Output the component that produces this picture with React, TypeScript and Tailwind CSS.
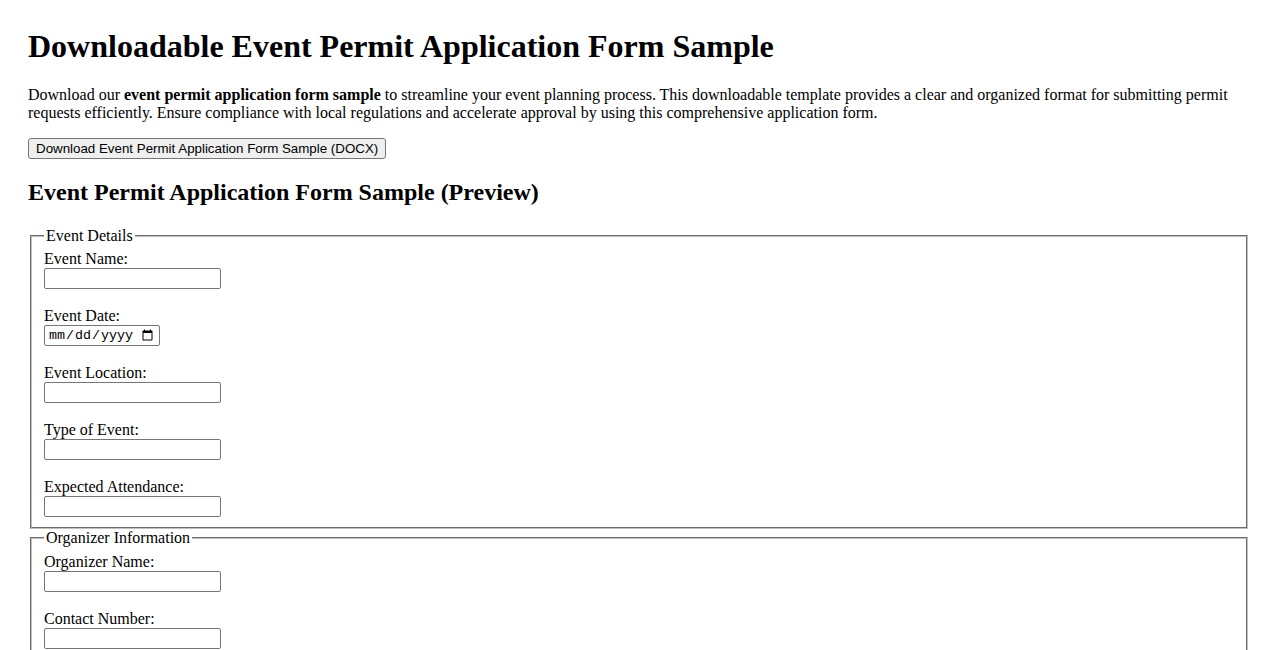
import React from "react";

const serif = "font-['Liberation_Serif','Times_New_Roman',serif]";

function Field({ label, type = "text" }: { label: string; type?: string }) {
    return (
        <div className="flex flex-col items-start">
            <label className="block leading-[18px]">{label}</label>
            {type === "date" ? (
                <input
                    type="date"
                    className="w-[116px] h-[21px] border border-[#767676] rounded-[2px] px-[3px] text-[13.333px] font-['Liberation_Mono',monospace] bg-white"
                />
            ) : (
                <input
                    type={type}
                    className="w-[177px] h-[21px] border border-[#767676] rounded-[2px] px-[2px] text-[13.333px] bg-white"
                />
            )}
        </div>
    );
}

function Section({ title, children }: { title: string; children: React.ReactNode }) {
    return (
        <fieldset className="mx-[2px] px-[12px] pt-[5.6px] pb-[10px] border-2 [border-style:groove] border-[#c0c0c0]">
            <legend className="px-[2px] leading-[18px]">{title}</legend>
            <div className="flex flex-col gap-[18px]">{children}</div>
        </fieldset>
    );
}

export default function App() {
    return (
        <div className={`${serif} text-black bg-white min-h-screen pt-[8px] px-[28px] text-[16px]`}>
            <h1 className="text-[32px] font-bold leading-[36.8px] mt-[20px] mb-[21.44px]">
                Downloadable Event Permit Application Form Sample
            </h1>
            <p className="leading-[18px] mb-[16px]">
                Download our <strong>event permit application form sample</strong> to streamline your event planning
                process. This downloadable template provides a clear and organized format for submitting permit
                requests efficiently. Ensure compliance with local regulations and accelerate approval by using this
                comprehensive application form.
            </p>
            <button className="block h-[21px] px-[7px] bg-[#efefef] border border-[#767676] rounded-[3px] text-[13.333px] font-['Liberation_Sans',Arial,sans-serif] leading-none">
                Download Event Permit Application Form Sample (DOCX)
            </button>
            <h2 className="text-[24px] font-bold leading-[27.6px] mt-[19.92px] mb-[19.92px]">
                Event Permit Application Form Sample (Preview)
            </h2>
            <form>
                <Section title="Event Details">
                    <Field label="Event Name:" />
                    <Field label="Event Date:" type="date" />
                    <Field label="Event Location:" />
                    <Field label="Type of Event:" />
                    <Field label="Expected Attendance:" />
                </Section>
                <Section title="Organizer Information">
                    <Field label="Organizer Name:" />
                    <Field label="Contact Number:" />
                    <Field label="Email Address:" />
                    <Field label="Organization Name:" />
                </Section>
            </form>
        </div>
    );
}
